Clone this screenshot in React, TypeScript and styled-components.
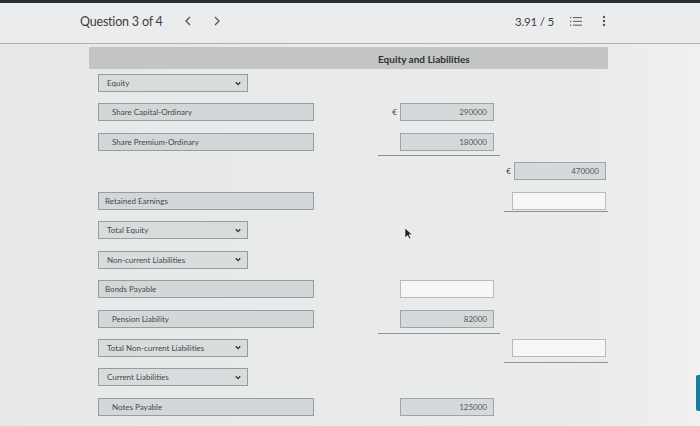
import React from "react";
import styled, { createGlobalStyle } from "styled-components";

type Cell = {
  value?: string;
  empty?: boolean;
  euro?: boolean;
  line?: number;
};

type RowData = {
  label?: string;
  kind?: "select" | "input";
  indent?: number;
  col2?: Cell;
  col3?: Cell;
};

const rows: RowData[] = [
  { label: "Equity", kind: "select", indent: 8 },
  { label: "Share Capital-Ordinary", kind: "input", indent: 13, col2: { value: "290000", euro: true } },
  { label: "Share Premium-Ordinary", kind: "input", indent: 13, col2: { value: "180000", line: 4 } },
  { col3: { value: "470000", euro: true } },
  { label: "Retained Earnings", kind: "input", indent: 6, col3: { empty: true, line: 1 } },
  { label: "Total Equity", kind: "select", indent: 8 },
  { label: "Non-current Liabilities", kind: "select", indent: 8 },
  { label: "Bonds Payable", kind: "input", indent: 6, col2: { empty: true } },
  { label: "Pension Liability", kind: "input", indent: 13, col2: { value: "82000", line: 5 } },
  { label: "Total Non-current Liabilities", kind: "select", indent: 8, col3: { empty: true, line: 5 } },
  { label: "Current Liabilities", kind: "select", indent: 8 },
  { label: "Notes Payable", kind: "input", indent: 13, col2: { value: "125000" } },
];

const App = () => {
  return (
    <>
      <GlobalStyle />
      <Screen>
        <TopEdge />
        <TopBar>
          <TitleGroup>
            <Title>Question 3 of 4</Title>
            <NavArrow>
              <svg width="8" height="10" viewBox="0 0 8 10">
                <path d="M6 1 L2 5 L6 9" fill="none" stroke="#555" strokeWidth="1.3" />
              </svg>
            </NavArrow>
            <NavArrow>
              <svg width="8" height="10" viewBox="0 0 8 10">
                <path d="M2 1 L6 5 L2 9" fill="none" stroke="#555" strokeWidth="1.3" />
              </svg>
            </NavArrow>
          </TitleGroup>
          <ScoreGroup>
            <Score>3.91 / 5</Score>
            <ListIcon width="12" height="11" viewBox="0 0 12 11">
              <g fill="#666">
                <rect x="0" y="1" width="1.3" height="1.3" />
                <rect x="0" y="4.8" width="1.3" height="1.3" />
                <rect x="0" y="8.6" width="1.3" height="1.3" />
                <rect x="3" y="1" width="9" height="1.1" />
                <rect x="3" y="4.8" width="9" height="1.1" />
                <rect x="3" y="8.6" width="9" height="1.1" />
              </g>
            </ListIcon>
            <svg width="4" height="12" viewBox="0 0 4 12">
              <g fill="#555">
                <circle cx="2" cy="2" r="1.2" />
                <circle cx="2" cy="6" r="1.2" />
                <circle cx="2" cy="10" r="1.2" />
              </g>
            </svg>
          </ScoreGroup>
        </TopBar>
        <Content>
          <Sheet>
            <HeaderBar>
              <span />
              <HeaderTitle>Equity and Liabilities</HeaderTitle>
              <span />
            </HeaderBar>
            <Rows>
              {rows.map((row, i) => (
                <Row key={i}>
                  <LabelCell>
                    {row.label && (
                      <LabelField $select={row.kind === "select"} $indent={row.indent ?? 8}>
                        <span>{row.label}</span>
                        {row.kind === "select" && (
                          <svg width="6" height="5" viewBox="0 0 6 5">
                            <path d="M0.8 1.2 L3 3.6 L5.2 1.2" fill="none" stroke="#333" strokeWidth="1.3" />
                          </svg>
                        )}
                      </LabelField>
                    )}
                  </LabelCell>
                  <AmountCell $line={row.col2?.line} $col={2}>
                    {row.col2 && (
                      <>
                        {row.col2.euro && <Euro>€</Euro>}
                        <Amount $empty={row.col2.empty} $width={94}>
                          {row.col2.value}
                        </Amount>
                      </>
                    )}
                  </AmountCell>
                  <AmountCell $line={row.col3?.line} $col={3}>
                    {row.col3 && (
                      <>
                        {row.col3.euro && <Euro>€</Euro>}
                        <Amount $empty={row.col3.empty} $width={row.col3.empty ? 94 : 92}>
                          {row.col3.value}
                        </Amount>
                      </>
                    )}
                  </AmountCell>
                </Row>
              ))}
            </Rows>
          </Sheet>
          <Pointer>
            <svg width="9" height="13" viewBox="0 0 9 13">
              <path d="M1 1 L1 11 L3.5 8.5 L5.5 12 L7 11.3 L5 7.8 L8.3 7.8 Z" fill="#222" stroke="#fff" strokeWidth="0.6" />
            </svg>
          </Pointer>
          <SideTab />
        </Content>
        <BottomEdge />
      </Screen>
    </>
  );
};

export default App;

const GlobalStyle = createGlobalStyle`
  html, body {
    margin: 0;
    padding: 0;
    background: #e8e9e9;
    font-family: Lato, "Open Sans", sans-serif;
  }
`;

const Screen = styled.div`
  width: 700px;
  height: 426px;
  display: flex;
  flex-direction: column;
  overflow: hidden;
  background: #e9eaea;
`;

const TopEdge = styled.div`
  height: 3px;
  background: #2b2e31;
  flex-shrink: 0;
`;

const TopBar = styled.div`
  box-sizing: border-box;
  height: 41px;
  flex-shrink: 0;
  display: flex;
  align-items: center;
  justify-content: space-between;
  padding: 0 94px 4px 80px;
  background: #ebeced;
  border-bottom: 1px solid #aeb1b3;
  box-shadow: 0 1px 2px rgba(0, 0, 0, 0.12);
`;

const TitleGroup = styled.div`
  display: flex;
  align-items: center;
`;

const Title = styled.span`
  font-size: 12.5px;
  color: #3b3d3f;
  margin-right: 21px;
  letter-spacing: -0.2px;
`;

const NavArrow = styled.span`
  display: flex;
  align-items: center;
  margin-right: 21px;
`;

const ScoreGroup = styled.div`
  display: flex;
  align-items: center;
`;

const Score = styled.span`
  font-size: 11.5px;
  color: #3f4143;
  letter-spacing: -0.2px;
`;

const ListIcon = styled.svg`
  margin: 0 20px 0 16px;
`;

const Content = styled.div`
  position: relative;
  flex: 1;
  padding: 3px 0 0 89px;
  background: linear-gradient(90deg, #e7e8e8 0%, #eaebeb 85%, #f0f0ef 100%);
`;

const Sheet = styled.div`
  width: 519px;
`;

const gridCols = `289px 122px 108px`;

const HeaderBar = styled.div`
  height: 22px;
  display: grid;
  grid-template-columns: ${gridCols};
  align-items: center;
  background: #c3c5c5;
`;

const HeaderTitle = styled.span`
  font-size: 10px;
  font-weight: 700;
  color: #2d2f31;
  white-space: nowrap;
  padding-top: 2px;
`;

const Rows = styled.div`
  display: grid;
  grid-auto-rows: 29.45px;
  padding-top: 5px;
`;

const Row = styled.div`
  display: grid;
  grid-template-columns: ${gridCols};
  align-items: start;
`;

const LabelCell = styled.div`
  padding-left: 9px;
`;

const LabelField = styled.div<{ $select: boolean; $indent: number }>`
  box-sizing: border-box;
  width: ${({ $select }) => ($select ? "150px" : "216px")};
  height: 18px;
  display: flex;
  align-items: center;
  justify-content: space-between;
  padding: 0 6px 0 ${({ $indent }) => $indent}px;
  background: ${({ $select }) => ($select ? "#d9dcdd" : "#d3d7d9")};
  border: 1px solid #989ca0;
  font-size: 8px;
  color: #46484a;
  white-space: nowrap;
`;

const AmountCell = styled.div<{ $line?: number; $col: number }>`
  display: flex;
  align-items: flex-start;
  justify-content: flex-end;
  padding-right: ${({ $col }) => ($col === 2 ? "6px" : "2px")};
  margin-left: ${({ $col }) => ($col === 3 ? "4px" : "0")};
  padding-bottom: ${({ $line }) => ($line ? `${$line}px` : "0")};
  border-bottom: ${({ $line }) => ($line ? "1px solid #8e9194" : "none")};
`;

const Euro = styled.span`
  font-size: 8px;
  color: #46484a;
  margin-right: 3px;
  line-height: 18px;
`;

const Amount = styled.div<{ $empty?: boolean; $width: number }>`
  box-sizing: border-box;
  width: ${({ $width }) => $width}px;
  height: 18px;
  display: flex;
  align-items: center;
  justify-content: flex-end;
  padding-right: 6px;
  font-size: 8px;
  color: #55585a;
  background: ${({ $empty }) => ($empty ? "#f7f7f7" : "#d5d9db")};
  border: ${({ $empty }) => ($empty ? "1.5px solid #c6b4b6" : "1px solid #a0a4a7")};
`;

const Pointer = styled.div`
  position: absolute;
  left: 404px;
  top: 183px;
  display: flex;
`;

const SideTab = styled.div`
  position: absolute;
  right: 0;
  top: 331px;
  width: 4px;
  height: 36px;
  border-radius: 2px 0 0 2px;
  background: #1b7d9c;
`;

const BottomEdge = styled.div`
  height: 4px;
  flex-shrink: 0;
  background: #2e3134;
`;
